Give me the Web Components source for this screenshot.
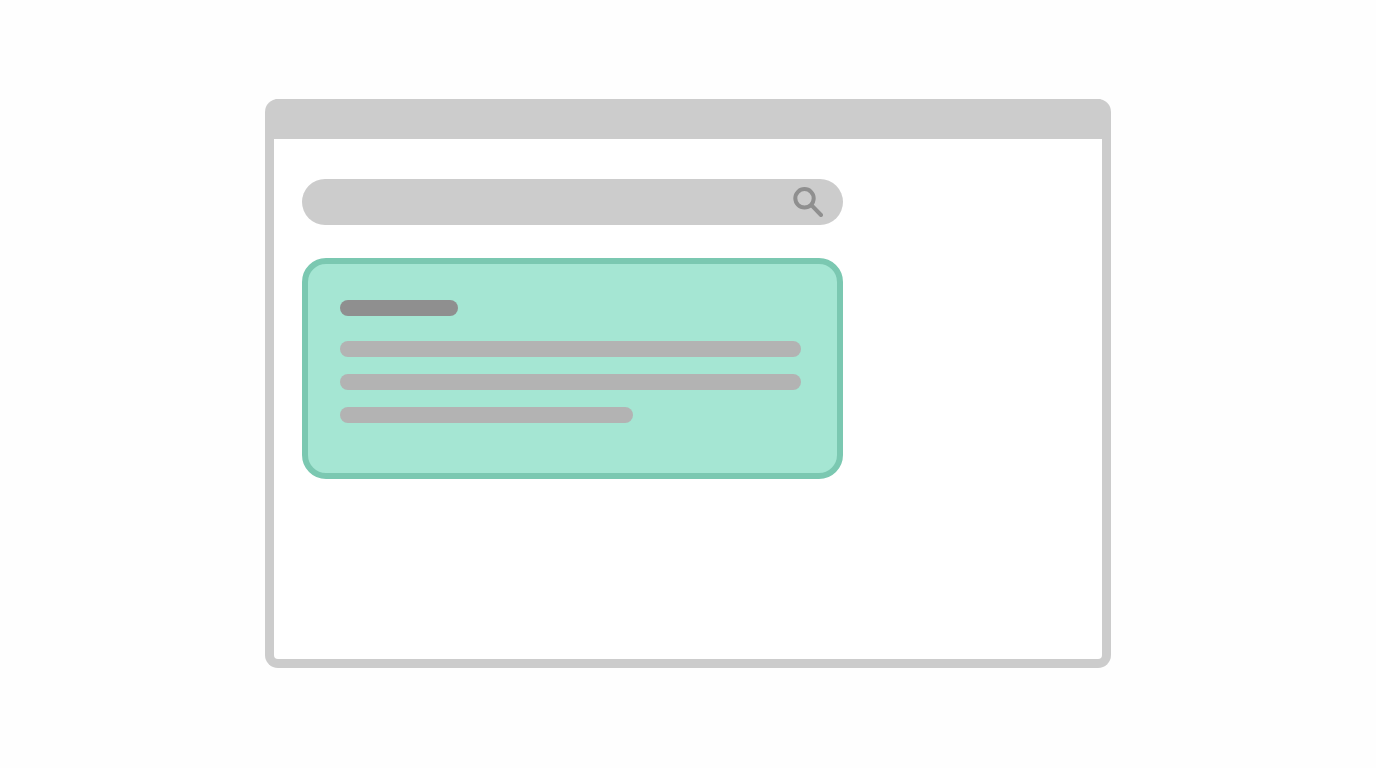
<!DOCTYPE html>
<html lang="en">
<head>
<meta charset="utf-8">
<meta name="viewport" content="width=device-width, initial-scale=1">
<title>Search result</title>
<style>
    :root {
        --frame: #cccccc;
        --mint: #a5e6d3;
        --mint_dark: #7bc8b1;
        --ink: #8f8f8f;
        --line: #b3b3b3;
    }
    * {
        box-sizing: border-box;
    }
    body {
        margin: 0;
        min-height: 100vh;
        padding: 99px clamp(16px, calc(50vw - 423px), 265px) 100px;
        display: flex;
        background-color: #fefefe;
        font-family: "Liberation Sans", sans-serif;
    }
</style>
</head>
<body>
<browser-window>
    <search-bar label="Search"></search-bar>
    <result-card>
        <skeleton-bar slot="title" tone="dark" size="short"></skeleton-bar>
        <skeleton-bar></skeleton-bar>
        <skeleton-bar></skeleton-bar>
        <skeleton-bar size="medium"></skeleton-bar>
    </result-card>
</browser-window>

<script>
customElements.define("browser-window", class BrowserWindow extends HTMLElement{
    constructor(){
        super()
        this.shadow = this.attachShadow({mode: "open"})
        this.shadow.innerHTML = `
            <style>
            :host {
                flex: 1;
                min-width: 0;
                display: flex;
                flex-direction: column;
                box-sizing: border-box;
                border: 9px solid var(--frame);
                border-top: 0;
                border-radius: 13px;
                background-color: var(--frame);
            }
            header {
                height: 40px;
                background-color: var(--frame);
                border-radius: 4px 4px 0 0;
            }
            main {
                flex: 1;
                padding: 40px 28px;
                background-color: #fff;
                border-radius: 0 0 4px 4px;
            }
            .column {
                max-width: 541px;
                display: flex;
                flex-direction: column;
                gap: 33px;
            }
            </style>
            <header></header>
            <main>
                <div class="column"><slot></slot></div>
            </main>
        `
    }
})

customElements.define("search-bar", class SearchBar extends HTMLElement{
    constructor(){
        super()
        this.shadow = this.attachShadow({mode: "open"})
        this.shadow.innerHTML = `
            <style>
            :host {
                display: block;
            }
            form {
                margin: 0;
                height: 46px;
                padding: 0 20px 0 24px;
                box-sizing: border-box;
                display: flex;
                align-items: center;
                gap: 12px;
                background-color: var(--frame);
                border-radius: 23px;
            }
            input {
                flex: 1;
                min-width: 0;
                height: 100%;
                padding: 0;
                border: none;
                outline: none;
                background: transparent;
                font: inherit;
                appearance: none;
            }
            button {
                padding: 0;
                border: none;
                background: transparent;
                color: var(--ink);
                display: flex;
                cursor: pointer;
            }
            .icon {
                width: 30px;
                height: 30px;
            }
            </style>
            <form role="search">
                <input type="search" aria-label="${this.getAttribute("label")}">
                <button type="button" aria-label="${this.getAttribute("label")}">
                    <svg class="icon" viewBox="0 0 30 30" fill="none" stroke="currentColor" stroke-width="4" stroke-linecap="round">
                        <circle cx="11.5" cy="11.3" r="9.2"></circle>
                        <line x1="18.4" y1="18.2" x2="28" y2="28"></line>
                    </svg>
                </button>
            </form>
        `
    }
})

customElements.define("result-card", class ResultCard extends HTMLElement{
    constructor(){
        super()
        this.shadow = this.attachShadow({mode: "open"})
        this.shadow.innerHTML = `
            <style>
            :host {
                display: block;
            }
            article {
                padding: 36px 36px 50px 32px;
                background-color: var(--mint);
                border: 6px solid var(--mint_dark);
                border-radius: 24px;
            }
            .card-title {
                margin-bottom: 25px;
            }
            .card-lines {
                display: flex;
                flex-direction: column;
                gap: 17px;
            }
            </style>
            <article>
                <div class="card-title"><slot name="title"></slot></div>
                <div class="card-lines"><slot></slot></div>
            </article>
        `
    }
})

customElements.define("skeleton-bar", class SkeletonBar extends HTMLElement{
    constructor(){
        super()
        this.shadow = this.attachShadow({mode: "open"})
        this.shadow.innerHTML = `
            <style>
            :host {
                display: block;
                height: 16px;
                border-radius: 8px;
                background-color: var(--line);
            }
            :host([tone="dark"]) {
                background-color: var(--ink);
            }
            :host([size="short"]) {
                max-width: 118px;
            }
            :host([size="medium"]) {
                max-width: 293px;
            }
            </style>
        `
    }
})
</script>
</body>
</html>
